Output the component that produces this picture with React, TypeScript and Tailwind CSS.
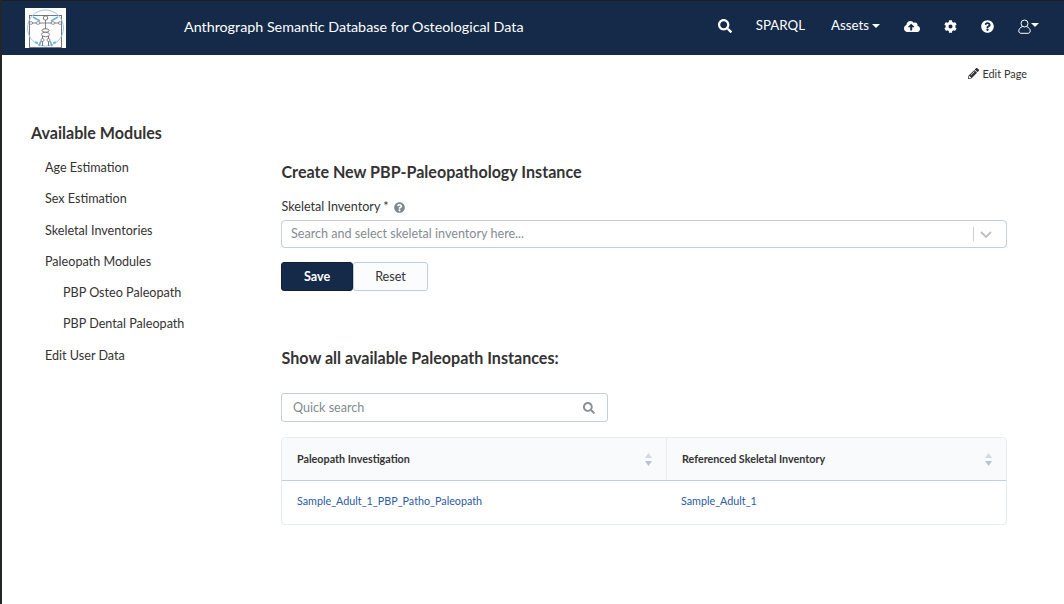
import React from 'react';
import { FaSearch, FaCloudUploadAlt, FaCog, FaQuestionCircle, FaPencilAlt } from 'react-icons/fa';

const MODULES = [
	{ label: 'Age Estimation', sub: false },
	{ label: 'Sex Estimation', sub: false },
	{ label: 'Skeletal Inventories', sub: false },
	{ label: 'Paleopath Modules', sub: false },
	{ label: 'PBP Osteo Paleopath', sub: true },
	{ label: 'PBP Dental Paleopath', sub: true },
	{ label: 'Edit User Data', sub: false },
];

function Logo() {
	return (
		<svg width="41" height="40" viewBox="0 0 41 40" className="bg-white shrink-0">
			<rect x="4.5" y="7.500" width="32" height="32" fill="none" stroke="#777" strokeWidth="1" />
			<circle cx="20.5" cy="20" r="18" fill="none" stroke="#9cc8f0" strokeWidth="1" />
			{/* raised arms and spread legs, blue */}
			<path d="M8 9l7 4M33 9l-7 4M14 38l2-5M27 38l-2-5M13 35l-3-1M28 35l3-1" fill="none" stroke="#6db0ee" strokeWidth="1.700" />
			{/* head, arms */}
			<circle cx="20.500" cy="10" r="2.200" fill="none" stroke="#666" strokeWidth="0.9" />
			<path d="M6 15h29M20.500 12v16" fill="none" stroke="#666" strokeWidth="0.8" />
			<ellipse cx="6" cy="15" rx="1.800" ry="1.300" fill="#fff" stroke="#666" strokeWidth="0.7" />
			<ellipse cx="13" cy="15" rx="2" ry="1.300" fill="#fff" stroke="#666" strokeWidth="0.7" />
			<ellipse cx="28" cy="15" rx="2" ry="1.300" fill="#fff" stroke="#666" strokeWidth="0.7" />
			<ellipse cx="35" cy="15" rx="1.800" ry="1.300" fill="#fff" stroke="#666" strokeWidth="0.7" />
			{/* pelvis, legs */}
			<ellipse cx="20.500" cy="22.500" rx="3.500" ry="1.800" fill="#fff" stroke="#666" strokeWidth="0.9" />
			<ellipse cx="20.500" cy="26.500" rx="4" ry="2.200" fill="#fff" stroke="#666" strokeWidth="0.8" />
			<circle cx="17.500" cy="32" r="1.500" fill="#fff" stroke="#666" strokeWidth="0.7" />
			<circle cx="23.500" cy="32" r="1.500" fill="#fff" stroke="#666" strokeWidth="0.7" />
			<path d="M17.500 28v2.500M23.500 28v2.500M17.500 33.500V38M23.500 33.500V38" fill="none" stroke="#666" strokeWidth="0.9" />
		</svg>
	);
}

function SortArrows() {
	return (
		<svg width="7" height="13" viewBox="0 0 7 13" className="shrink-0">
			<path d="M3.500 0L7 5H0z" fill="#d3d9e2" />
			<path d="M3.500 13L0 8h7z" fill="#b9c3d2" />
		</svg>
	);
}

export default function App() {
	return (
		<div className="h-[604px] w-[1064px] overflow-hidden bg-white border-l-2 border-[#23272b] text-[#333] [font-family:Lato,sans-serif]">
			{/* Top bar */}
			<header className="h-[55px] bg-[#152a49] border-t border-[#1b1f22] flex items-center text-white -ml-[2px]">
				<div className="ml-[25px] mt-[-1px] h-[40px]">
					<Logo />
				</div>
				<div className="ml-[118px] mb-[3px] text-[14.300px]">Anthrograph Semantic Database for Osteological Data</div>
				<nav className="ml-auto mb-[4px] flex items-center text-[13.300px] pr-[25px]">
					<FaSearch className="w-[14px] h-[14px]" />
					<span className="ml-[24px]">SPARQL</span>
					<span className="ml-[26px]">Assets</span>
					<span className="ml-[3px] border-x-[4px] border-t-[4px] border-x-transparent border-t-white" />
					<FaCloudUploadAlt className="ml-[24px] w-[16px] h-[15px]" />
					<FaCog className="ml-[24px] w-[13px] h-[13px]" />
					<FaQuestionCircle className="ml-[24px] w-[13px] h-[13px]" />
					<svg width="13" height="15" viewBox="0 0 13 15" className="ml-[24px]" fill="none" stroke="#fff" strokeWidth="1">
						<circle cx="6.500" cy="4.500" r="3.500" />
						<path d="M4.500 7.500C2 8.500 .8 10 .8 12c0 1.500 1 2.300 2.200 2.300h7c1.200 0 2.200-.8 2.200-2.300 0-2-1.200-3.500-3.700-4.500" />
					</svg>
					<span className="mb-[2px] border-x-[4px] border-t-[4px] border-x-transparent border-t-white" />
				</nav>
			</header>

			<div className="flex justify-end items-center gap-[3px] pr-[37px] pt-[11px] text-[10.900px] leading-[15px]">
				<FaPencilAlt className="w-[11px] h-[11px]" />
				<span>Edit Page</span>
			</div>

			<div className="flex">
				{/* Sidebar */}
				<aside className="w-[279px] shrink-0 pl-[29px] pt-[42px]">
					<h2 className="text-[16.100px] leading-[20px] font-bold">Available Modules</h2>
					<ul className="mt-[17px] text-[12.600px] leading-[16px]">
						{MODULES.map(m => (
							<li key={m.label} className={`h-[31.300px] ${m.sub ? 'pl-[32px]' : 'pl-[14px]'}`}>
								{m.label}
							</li>
						))}
					</ul>
				</aside>

				{/* Main column */}
				<main className="w-[726px] pt-[81px]">
					<h3 className="text-[16.100px] leading-[20px] pl-[0.500px] font-bold">Create New PBP-Paleopathology Instance</h3>

					<label className="mt-[17px] flex items-center text-[12.600px] leading-[16px] pl-[0.500px]">
						Skeletal Inventory *
						<FaQuestionCircle className="ml-[5px] w-[11px] h-[11px] text-[#7f8891]" />
					</label>

					<div className="mt-[5px] h-[28px] border border-[#c2cee0] rounded-[4px] flex items-center pl-[9px] pr-[14px] text-[12.600px] text-[#858b92]">
						<span>Search and select skeletal inventory here...</span>
						<span className="ml-auto h-[14px] w-px bg-[#ccc]" />
						<svg width="12" height="7" viewBox="0 0 12 7" className="ml-[6px]" fill="none" stroke="#bfbfbf" strokeWidth="1.800">
							<path d="M1 1l5 5 5-5" />
						</svg>
					</div>

					<div className="mt-[14px] flex text-[12.600px]">
						<button className="h-[29px] w-[72px] pt-[1px] bg-[#152a49] border border-[#0f1f38] rounded-[3px] text-white font-bold">Save</button>
						<button className="h-[29px] w-[75px] pt-[1px] bg-[#fbfcfe] border border-[#c2cee0] rounded-[3px] text-[#333]">Reset</button>
					</div>

					<h3 className="mt-[57px] text-[16.100px] leading-[20px] pl-[0.500px] font-bold">Show all available Paleopath Instances:</h3>

					<div className="mt-[25px] w-[327px] h-[29px] border border-[#c2cee0] rounded-[3px] flex items-center pl-[11px] pr-[12px] text-[12.600px] text-[#858b92]">
						<span className="pt-[1px]">Quick search</span>
						<FaSearch className="ml-auto w-[12px] h-[12px] text-[#8a8f94]" />
					</div>

					<div className="mt-[15px] border border-[#e7ebf3] rounded-[4px] text-[10.750px]">
						<div className="flex h-[43px] bg-[#f9fafc] border-b border-[#c2cee0] rounded-t-[4px] font-bold">
							<div className="w-[385px] border-r border-[#e7ebf3] flex items-center pl-[15px] pr-[14px]">
								<span>Paleopath Investigation</span>
								<span className="ml-auto"><SortArrows /></span>
							</div>
							<div className="flex-1 flex items-center pl-[15px] pr-[14px]">
								<span>Referenced Skeletal Inventory</span>
								<span className="ml-auto"><SortArrows /></span>
							</div>
						</div>
						<div className="flex h-[43px] pb-[2px] items-center text-[#2b5aa5]">
							<div className="w-[385px] pl-[15px]">Sample_Adult_1_PBP_Patho_Paleopath</div>
							<div className="flex-1 pl-[14px]">Sample_Adult_1</div>
						</div>
					</div>
				</main>
			</div>
		</div>
	);
}
